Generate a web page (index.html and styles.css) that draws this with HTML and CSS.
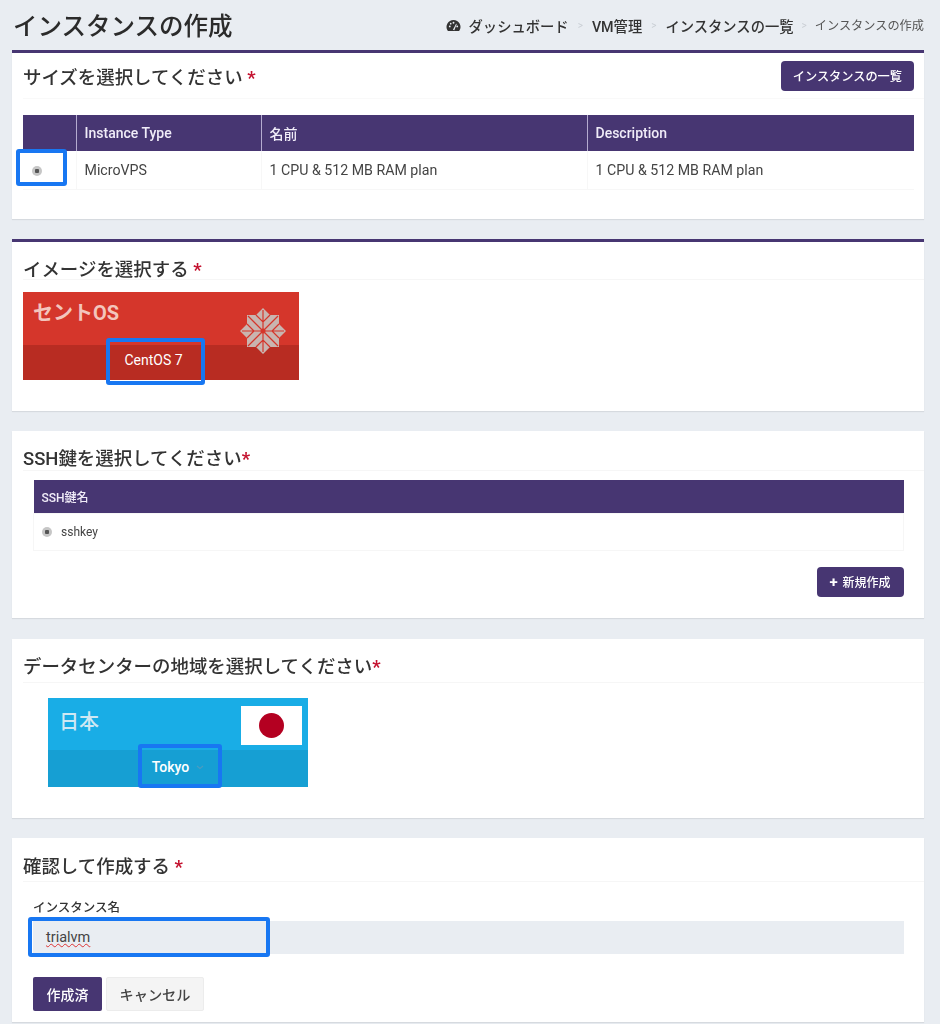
FILE: index.html
```html
<!DOCTYPE html>
<html lang="ja">
<head>
<meta charset="utf-8">
<title>インスタンスの作成</title>
<link rel="stylesheet" href="styles.css">
</head>
<body>
<header class="page-head">
  <h1>インスタンスの作成</h1>
  <nav class="crumbs">
    <svg class="gauge" viewBox="0 0 16 14" width="15" height="13"><path fill="#333" d="M8 1a7.5 7.5 0 0 0-6.4 11.4l.5.6h11.8l.5-.6A7.5 7.5 0 0 0 8 1z"/><circle cx="4" cy="8" r="1" fill="#e9edf2"/><circle cx="12" cy="8" r="1" fill="#e9edf2"/><circle cx="8" cy="4" r="1" fill="#e9edf2"/><circle cx="5" cy="5" r=".9" fill="#e9edf2"/><path d="M7.4 11.5L10.8 5l.7.3-2.6 6.8z" fill="#e9edf2"/></svg>
    <a>ダッシュボード</a><i>&gt;</i><a>VM管理</a><i>&gt;</i><a>インスタンスの一覧</a><i class="last">&gt;</i><span>インスタンスの作成</span>
  </nav>
</header>

<main class="cards">
  <section class="card card-top card-size">
    <div class="card-head head-btn">
      <h2>サイズを選択してください <b>*</b></h2>
      <button class="btn">インスタンスの一覧</button>
    </div>
    <div class="table-wrap">
      <div class="hl hl-radio"></div>
      <table class="plans">
        <thead><tr><th class="c-radio"></th><th class="c-type">Instance Type</th><th class="c-name">名前</th><th>Description</th></tr></thead>
        <tbody><tr><td class="c-radio"><span class="radio"></span></td><td>MicroVPS</td><td>1 CPU &amp; 512 MB RAM plan</td><td>1 CPU &amp; 512 MB RAM plan</td></tr></tbody>
      </table>
    </div>
  </section>

  <section class="card card-top card-image">
    <div class="card-head"><h2>イメージを選択する <b>*</b></h2></div>
    <div class="tile tile-red">
      <div class="tile-top">
        <span class="tile-name">セントOS</span>
        <svg class="centos" viewBox="0 0 46 46" width="46" height="46">
          <path fill="#c9b5b0" d="M23 0l7 7h9v9l7 7-7 7v9h-9l-7 7-7-7H7v-9l-7-7 7-7V7h9z"/>
          <path stroke="#d5362b" stroke-width="1.2" d="M23 2v42M2 23h42M8 8l30 30M38 8L8 38M16 7l7 7 7-7M39 16l-7 7 7 7M30 39l-7-7-7 7M7 30l7-7-7-7" fill="none"/>
          <circle cx="23" cy="23" r="2.5" fill="#d5362b"/>
        </svg>
      </div>
      <div class="tile-bottom"><span>CentOS 7</span></div>
      <div class="hl hl-centos"></div>
    </div>
  </section>

  <section class="card card-ssh">
    <div class="card-head"><h2>SSH鍵を選択してください<b>*</b></h2></div>
    <div class="ssh-body">
      <table class="keys">
        <thead><tr><th>SSH鍵名</th></tr></thead>
        <tbody><tr><td><span class="radio"></span>sshkey</td></tr></tbody>
      </table>
      <div class="right"><button class="btn btn-new"><span class="plus">+</span> 新規作成</button></div>
    </div>
  </section>

  <section class="card card-region">
    <div class="card-head"><h2>データセンターの地域を選択してください<b>*</b></h2></div>
    <div class="tile tile-blue">
      <div class="tile-top">
        <span class="tile-name">日本</span>
        <span class="flag"><span class="sun"></span></span>
      </div>
      <div class="tile-bottom"><span>Tokyo</span><svg class="chev" viewBox="0 0 8 5" width="8" height="5"><path d="M1 1l3 2.5L7 1" fill="none" stroke="#4a9cc0" stroke-width="1.2"/></svg></div>
      <div class="hl hl-tokyo"></div>
    </div>
  </section>

  <section class="card card-confirm">
    <div class="card-head"><h2>確認して作成する <b>*</b></h2></div>
    <div class="form">
      <label class="field-label">インスタンス名</label>
      <div class="field">
        <span class="field-value">trialvm</span>
        <div class="hl hl-input"></div>
      </div>
      <div class="actions">
        <button class="btn btn-submit">作成済</button>
        <button class="btn-cancel">キャンセル</button>
      </div>
    </div>
  </section>
</main>
</body>
</html>
```
FILE: styles.css
```css
* { box-sizing: border-box; }
html, body { margin: 0; padding: 0; }
body {
  width: 940px;
  height: 1024px;
  overflow: hidden;
  background: #e9edf2;
  color: #333;
  font-family: Roboto, "Noto Sans CJK JP", sans-serif;
  filter: blur(0.5px);
}
.page-head {
  height: 50px;
  padding: 0 16px 0 13px;
  display: flex;
  justify-content: space-between;
  align-items: center;
}
h1 { margin: 0 0 2px; font-size: 24.5px; font-weight: 500; color: #2b2b2b; }
.crumbs { display: flex; align-items: center; font-size: 14.3px; font-weight: 500; color: #333; }
.gauge { margin-right: 8px; }
.crumbs i { font-style: normal; font-size: 10px; color: #c9ced4; margin: 0 9px; font-weight: 400; }
.crumbs i.last { margin: 0 8px; }
.crumbs span { font-size: 12.2px; font-weight: 400; color: #555; }
.cards { padding: 0 16px 0 12px; display: flex; flex-direction: column; }
.card { background: #fff; box-shadow: 0 1px 1px rgba(0,0,0,.08); }
.card-top { border-top: 3px solid #473672; }
.card-size { height: 169px; margin-bottom: 20px; }
.card-image { height: 172px; margin-bottom: 20px; }
.card-ssh { height: 187px; margin-bottom: 21px; }
.card-region { height: 179px; margin-bottom: 20px; }
.card-confirm { height: 184px; }
.card-head {
  margin-left: 11px;
  height: 43px;
  display: flex;
  align-items: center;
  border-bottom: 1px solid #f6f6f6;
}
.card-image .card-head { height: 38px; padding-top: 15px; }
.card-ssh .card-head { height: 40px; padding-top: 12px; }
.card-region .card-head { height: 44px; padding-top: 8px; }
.card-confirm .card-head { height: 44px; padding-top: 10px; }
.head-btn { justify-content: space-between; height: 46px; padding-right: 10px; border-bottom: 1px solid #f9f9f9; }
h2 { margin: 0; font-size: 18.45px; font-weight: 500; color: #333; }
h2 b { color: #c4122f; font-weight: 700; }
.btn {
  border: 0;
  border-radius: 4px;
  background: #473672;
  color: #fff;
  font: 500 12.2px Roboto, "Noto Sans CJK JP", sans-serif;
  height: 30px;
  padding: 0 12px;
}
.table-wrap { position: relative; margin: 16px 10px 0 11px; }
table { border-collapse: collapse; width: 100%; table-layout: fixed; }
th { background: #473672; color: #f0ecf8; text-align: left; font-weight: 500; }
.plans th { height: 36px; font-size: 14px; padding: 0 8px; border-left: 1px solid #b5abd0; }
.plans th:first-child { border-left: 0; }
.plans td { height: 38px; font-size: 14.2px; padding: 0 8px; border-bottom: 1px solid #f7f7f7; border-left: 1px solid #f7f7f7; color: #444; }
.plans td:first-child { border-left: 0; }
.c-radio { width: 53px; }
.c-type { width: 185px; }
.c-name { width: 326px; }
.plans td.c-radio { padding: 0 0 0 9px; }
.radio {
  display: inline-block;
  width: 10px;
  height: 10px;
  border-radius: 50%;
  background: radial-gradient(circle, #555 0 2px, #c6c6c6 2.5px);
  vertical-align: middle;
}
.hl { position: absolute; z-index: 2; border: 4px solid #1877f2; border-radius: 3px; }
.hl-radio { left: -7px; top: 34px; width: 51px; height: 37px; }
.tile { position: relative; color: #fff; }
.tile-top { position: relative; z-index: 1; display: flex; justify-content: space-between; }
.tile-bottom { display: flex; justify-content: center; font-size: 14px; font-weight: 400; }
.tile-name { color: #f3c5bd; font-weight: 700; }
.tile-red { margin: 12px 0 0 11px; width: 276px; height: 88px; background: #d5362b; }
.tile-red .tile-top { height: 53px; padding: 5px 13px 0 10px; }
.tile-red .tile-name { font-size: 20px; }
.centos { margin-top: 11px; }
.tile-red .tile-bottom { height: 35px; background: #b82c22; align-items: center; padding: 0 15px 5px 0; }
.hl-centos { left: 83px; top: 46px; width: 99px; height: 47px; }
.ssh-body { padding: 9px 20px 0 21px; }
.keys th { height: 33px; font-size: 12px; padding: 0 8px; }
.keys td { height: 37px; font-size: 12px; padding: 0 8px; border: 1px solid #f6f6f6; color: #444; }
.keys .radio { margin-right: 9px; }
.right { display: flex; justify-content: flex-end; margin-top: 16px; }
.btn-new { font-size: 12px; padding: 0 12px 0 11px; height: 30px; width: 87px; }
.plus { font-weight: 700; font-size: 15px; margin-right: 2px; }
.tile-blue { margin: 15px 0 0 36px; width: 260px; height: 89px; background: #19ade6; }
.tile-blue .tile-top { height: 52px; padding: 8px 6px 0 11px; }
.tile-blue .tile-name { font-size: 20px; font-weight: 500; color: #cfe8f3; }
.flag { width: 61px; height: 39px; background: #fff; display: flex; align-items: center; justify-content: center; }
.sun { width: 25px; height: 25px; border-radius: 50%; background: #b40021; }
.tile-blue .tile-bottom { height: 37px; background: #169fd3; align-items: center; gap: 7px; font-weight: 500; padding: 0 0 4px 0; }
.chev { margin-top: 1px; }
.hl-tokyo { left: 90px; top: 46px; width: 84px; height: 44px; }
.form { padding: 18px 20px 0 21px; }
.field-label { display: block; font-size: 12.5px; font-weight: 500; color: #333; line-height: 15px; margin-bottom: 6px; }
.field { position: relative; height: 33px; background: #e9edf2; display: flex; align-items: center; padding-left: 13px; }
.field-value { font-size: 14.5px; color: #444; text-decoration: underline wavy #d33; text-decoration-thickness: 1px; }
.hl-input { left: -5px; top: -4px; width: 242px; height: 40px; }
.actions { display: flex; gap: 4px; margin-top: 23px; }
.btn-submit { width: 69px; height: 34px; font-size: 14px; border-radius: 2px; padding: 0; }
.btn-cancel { width: 98px; height: 34px; border: 1px solid #ececec; border-radius: 2px; background: #f4f4f4; color: #444; font: 500 14.2px Roboto, "Noto Sans CJK JP", sans-serif; }
```
